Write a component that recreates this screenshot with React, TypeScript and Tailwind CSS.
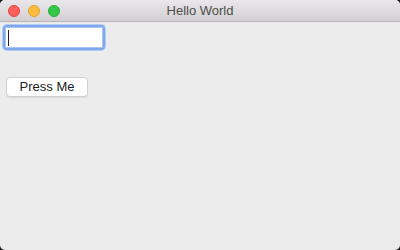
import React from "react";

const App: React.FC = () => {
  return (
    <div className="w-[400px] h-[250px] bg-[#1a1a1a] font-['Liberation_Sans',sans-serif]">
      <div className="w-full h-full rounded-[5px] overflow-hidden bg-[#ececec] flex flex-col">
        <div className="relative h-[22px] shrink-0 flex items-center bg-gradient-to-b from-[#e9e7e9] to-[#d2d0d2] border-b border-[#b6b4b6]">
          <div className="flex items-center gap-[8px] pl-[8px]">
            <span className="w-[12px] h-[12px] rounded-full bg-[#fc605c] border border-[#e0443e]" />
            <span className="w-[12px] h-[12px] rounded-full bg-[#fdbc40] border border-[#dea123]" />
            <span className="w-[12px] h-[12px] rounded-full bg-[#34c84a] border border-[#27aa35]" />
          </div>
          <div className="absolute inset-0 flex items-center justify-center text-[13px] text-[#4d4d4d] pointer-events-none">
            Hello World
          </div>
        </div>
        <div className="flex flex-col items-start pl-[2px] pt-[2px]">
          <div className="w-[104px] h-[27px] rounded-[5px] bg-[#b3ccf3] p-[1px]">
            <div className="w-full h-full rounded-[4px] bg-[#7fa8ec] p-[2px]">
              <div className="w-full h-full bg-[#a9c4f2] p-[1px]">
                <div className="w-full h-full bg-white flex items-center pl-[2px]">
                  <span className="w-[1px] h-[16px] bg-[#222]" />
                </div>
              </div>
            </div>
          </div>
          <button className="mt-[26px] ml-[4px] w-[82px] h-[20px] rounded-[4px] bg-white border border-[#d0d0d0] shadow-[0_1px_1px_rgba(0,0,0,0.08)] text-[13px] text-[#222] flex items-center justify-center">
            Press Me
          </button>
        </div>
      </div>
    </div>
  );
};

export default App;
